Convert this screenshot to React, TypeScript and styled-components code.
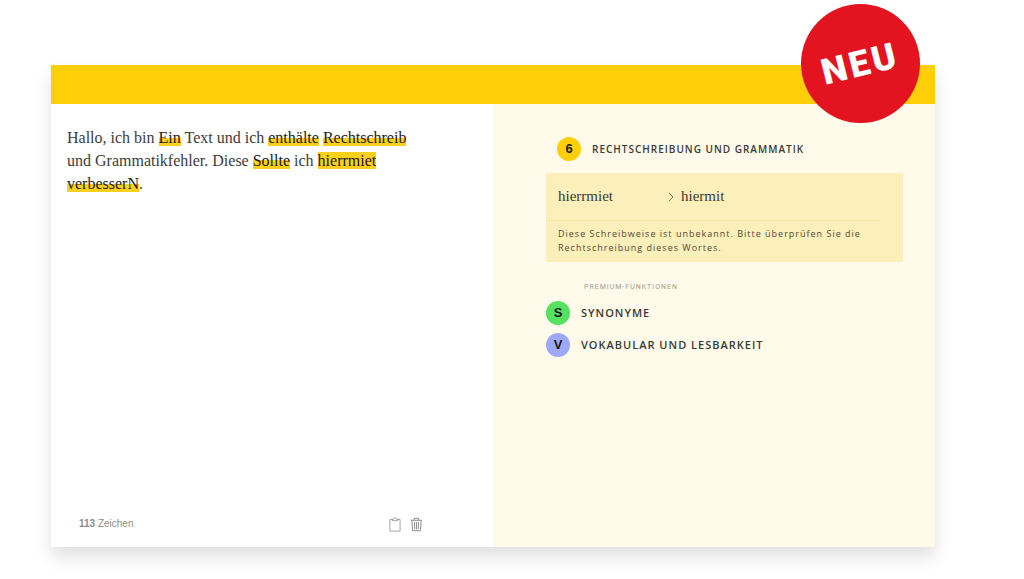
import React from "react";
import styled, { createGlobalStyle } from "styled-components";

const GlobalStyle = createGlobalStyle`
  *, *::before, *::after { box-sizing: border-box; }
  body { margin: 0; background: #fff; font-family: "Open Sans", Roboto, sans-serif; color: #3a3a36; }
  h2, p { margin: 0; }
`;

const Page = styled.main`
  display: flex;
  min-height: 100vh;
  padding: 65px 89px 32px 51px;
`;

const Card = styled.section`
  position: relative;
  display: flex;
  flex: 1;
  flex-direction: column;
  background: #fff;
  box-shadow: 0 10px 16px rgba(0, 0, 0, 0.12);
`;

const TopBar = styled.header`
  height: 39px;
  background: #fecf09;
`;

const NewBadge = styled.strong`
  position: absolute;
  top: -61px;
  right: 15px;
  display: flex;
  align-items: center;
  justify-content: center;
  width: 119px;
  height: 119px;
  border-radius: 50%;
  background: #e3131f;
  color: #fff;
  font: 900 36px/1 Roboto, sans-serif;
  letter-spacing: 3px;
`;

const Tilt = styled.span`
  transform: rotate(-14deg);
`;

const Columns = styled.div`
  display: grid;
  flex: 1;
  grid-template-columns: 1fr 1fr;
`;

const Editor = styled.div`
  display: flex;
  flex-direction: column;
  justify-content: space-between;
  padding: 22px 70px 12px 16px;
`;

const Copy = styled.p`
  color: #3c3c3c;
  font: 16px/23px "Liberation Serif", serif;
`;

const Mark = styled.mark<{ $active?: boolean }>`
  color: #1c1a12;
  background: ${(p) =>
    p.$active ? "#fcd01c" : "linear-gradient(transparent 50%, #fcd01c 50%)"};
`;

const EditorFooter = styled.footer`
  display: flex;
  align-items: center;
  justify-content: space-between;
  padding-left: 12px;
  color: #8c8c8c;
  font: 10px/22px "Liberation Sans", sans-serif;
`;

const Tools = styled.div`
  display: flex;
  gap: 9px;
`;

const ToolButton = styled.button`
  display: flex;
  padding: 0;
  border: 0;
  background: none;
  color: #8f8f8f;
  cursor: pointer;
`;

const Results = styled.aside`
  padding: 33px 32px 32px 53px;
  background: #fffae9;
`;

const Category = styled.div<{ $inset?: boolean }>`
  display: flex;
  align-items: center;
  gap: 11px;
  margin-bottom: 8px;
  padding-left: ${(p) => (p.$inset ? "11px" : "0")};
`;

const Dot = styled.span<{ $color: string }>`
  display: flex;
  align-items: center;
  justify-content: center;
  width: 24px;
  height: 24px;
  border-radius: 50%;
  background: ${(p) => p.$color};
  color: #17170f;
  font: 700 13px/24px "Liberation Sans", sans-serif;
`;

const CategoryTitle = styled.h2<{ $premium?: boolean }>`
  font-size: ${(p) => (p.$premium ? "11px" : "10px")};
  font-weight: 600;
  line-height: 24px;
  letter-spacing: 1px;
  text-transform: uppercase;
`;

const Suggestion = styled.article`
  margin-top: 12px;
  padding-bottom: 7px;
  background: #fdefba;
`;

const Replacement = styled.div`
  display: grid;
  grid-template-columns: 110px 13px 1fr;
  align-items: center;
  margin-right: 22px;
  padding: 12px 0 12px 12px;
  border-bottom: 1px solid #f7e4a0;
  font: 15px/23px "Liberation Serif", serif;
`;

const Explanation = styled.p`
  padding: 6px 22px 0 12px;
  color: #4d4938;
  font-size: 9px;
  line-height: 14px;
  letter-spacing: 1px;
`;

const PremiumLabel = styled.p`
  margin: 20px 0 8px 38px;
  color: #a09d90;
  font: 7px/11px Roboto, sans-serif;
  letter-spacing: 1px;
  text-transform: uppercase;
`;

const ClipboardIcon = () => (
  <svg width="12" height="15" viewBox="0 0 12 15" fill="none" stroke="currentColor" strokeWidth=".8">
    <path d="M3.5 2.5H.9v11.6h10.2V2.5H8.5" />
    <path d="M3.2 3.6V2.1h1.5C4.8.3 7.2.3 7.3 2.1h1.5v1.5z" />
  </svg>
);

const TrashIcon = () => (
  <svg width="13" height="15" viewBox="0 0 13 15" fill="none" stroke="currentColor" strokeWidth="1">
    <path d="M.8 3.3h11.4M4.3 3V1.3h4.4V3M1.9 3.5l.6 10.2h8l.6-10.2M4.5 5l.2 7.3M6.5 5v7.3M8.5 5l-.2 7.3" />
  </svg>
);

const ArrowIcon = () => (
  <svg width="6" height="10" viewBox="0 0 6 10" fill="none" stroke="#6b6650" strokeWidth=".9" aria-hidden="true">
    <path d="M.8.8 5 5 .8 9.2" />
  </svg>
);

export default function App() {
  return (
    <Page>
      <GlobalStyle />
      <Card>
        <TopBar />
        <Columns>
          <Editor>
            <Copy>
              Hallo, ich bin <Mark>Ein</Mark> Text und ich <Mark>enthälte</Mark>{" "}
              <Mark>Rechtschreib</Mark> und Grammatikfehler. Diese <Mark>Sollte</Mark> ich{" "}
              <Mark $active>hierrmiet</Mark> <Mark>verbesserN</Mark>.
            </Copy>
            <EditorFooter>
              <span>
                <b>113</b> Zeichen
              </span>
              <Tools>
                <ToolButton type="button" aria-label="Kopieren">
                  <ClipboardIcon />
                </ToolButton>
                <ToolButton type="button" aria-label="Löschen">
                  <TrashIcon />
                </ToolButton>
              </Tools>
            </EditorFooter>
          </Editor>
          <Results>
            <Category $inset>
              <Dot $color="#fecf09">6</Dot>
              <CategoryTitle>Rechtschreibung und Grammatik</CategoryTitle>
            </Category>
            <Suggestion>
              <Replacement>
                <span>hierrmiet</span>
                <ArrowIcon />
                <span>hiermit</span>
              </Replacement>
              <Explanation>
                Diese Schreibweise ist unbekannt. Bitte überprüfen Sie die Rechtschreibung dieses
                Wortes.
              </Explanation>
            </Suggestion>
            <PremiumLabel>Premium-Funktionen</PremiumLabel>
            <Category>
              <Dot $color="#55e261">S</Dot>
              <CategoryTitle $premium>Synonyme</CategoryTitle>
            </Category>
            <Category>
              <Dot $color="#9da9f8">V</Dot>
              <CategoryTitle $premium>Vokabular und Lesbarkeit</CategoryTitle>
            </Category>
          </Results>
        </Columns>
        <NewBadge>
          <Tilt>NEU</Tilt>
        </NewBadge>
      </Card>
    </Page>
  );
}
